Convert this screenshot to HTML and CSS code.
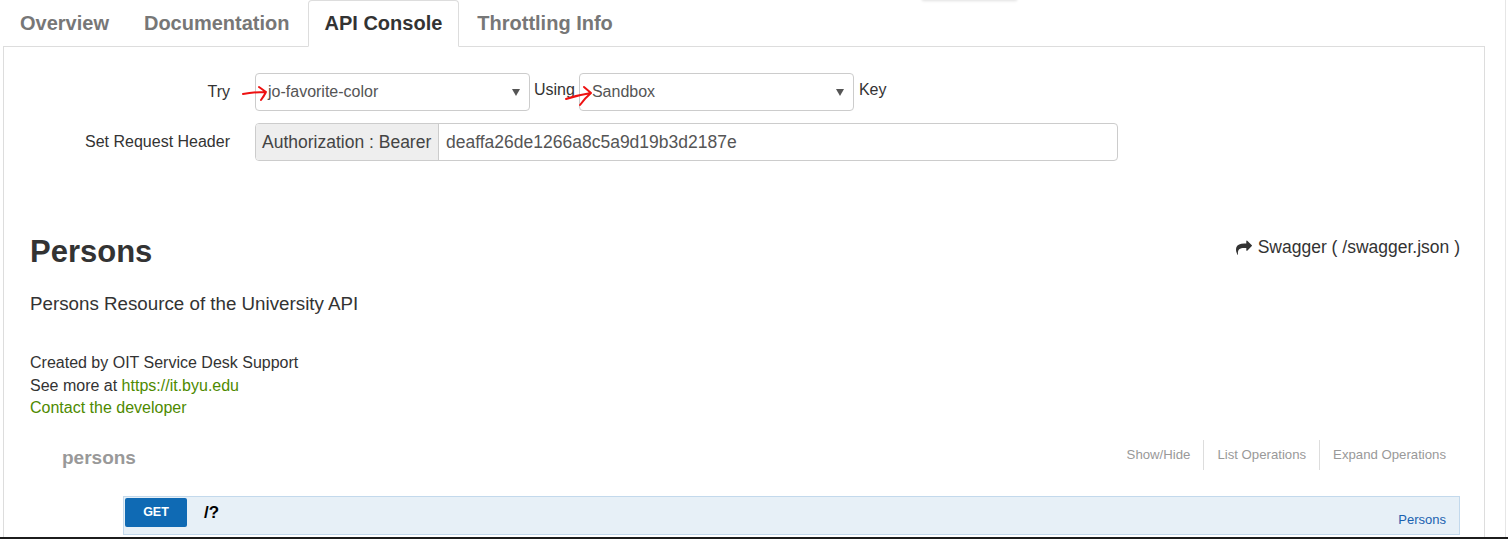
FILE: index.html
```html
<!DOCTYPE html>
<html lang="en">
<head>
<meta charset="utf-8">
<title>API Console</title>
<link rel="stylesheet" href="styles.css">
</head>
<body>
<div class="page">
  <div class="menu-shadow"></div>
  <div class="tabs">
    <ul class="nav-tabs">
      <li><a href="#">Overview</a></li>
      <li><a href="#">Documentation</a></li>
      <li class="active"><a href="#">API Console</a></li>
      <li><a href="#">Throttling Info</a></li>
    </ul>
    <div class="tab-pane">
      <div class="console-form">
        <div class="form-label">Try</div>
        <div class="controls">
          <div class="select"><span>jo-favorite-color</span><span class="caret"></span></div>
          <span class="inline-word using">Using</span>
          <div class="select"><span>Sandbox</span><span class="caret"></span></div>
          <span class="inline-word key">Key</span>
        </div>
        <div class="form-label">Set Request Header</div>
        <div class="controls">
          <div class="input-group">
            <span class="addon">Authorization : Bearer</span>
            <span class="input-value">deaffa26de1266a8c5a9d19b3d2187e</span>
          </div>
        </div>
      </div>

      <div class="info">
        <div class="title-row">
          <h2 class="api-title">Persons</h2>
          <a class="swagger-link" href="#">
            <svg class="share-icon" viewBox="0 0 1792 1792" width="16" height="16" aria-hidden="true"><path d="M1792 640q0 26-19 45l-512 512q-19 19-45 19t-45-19-19-45v-256h-224q-98 0-175.5 6t-154 21.5-133 42.5-105.5 69.5-80 101-48.5 138.5-17.5 181q0 55 5 123 0 6 2.5 23.5t2.5 26.5q0 15-8.5 25t-23.5 10q-16 0-28-17-7-9-13-22t-13.5-30-10.5-24q-127-285-127-451 0-199 53-333 162-403 875-403h224v-256q0-26 19-45t45-19 45 19l512 512q19 19 19 45z"/></svg>
            <span>Swagger ( /swagger.json )</span>
          </a>
        </div>
        <p class="description">Persons Resource of the University API</p>
        <div class="meta">
          <div>Created by OIT Service Desk Support</div>
          <div>See more at <a class="green" href="#">https://it.byu.edu</a></div>
          <div><a class="green" href="#">Contact the developer</a></div>
        </div>

        <div class="resource">
          <div class="resource-heading">
            <h3 class="resource-name">persons</h3>
            <ul class="options">
              <li>Show/Hide</li>
              <li>List Operations</li>
              <li>Expand Operations</li>
            </ul>
          </div>
          <div class="operation">
            <span class="method">GET</span>
            <span class="path">/?</span>
            <a class="op-link" href="#">Persons</a>
          </div>
        </div>
      </div>
    </div>
  </div>
  <svg class="annotations" viewBox="0 0 1508 539" width="1508" height="539" aria-hidden="true">
    <path d="M243 94 Q254 92 266 92 M259 87 L266 92 Q264 96 261 100" />
    <path d="M566 99 Q578 95 591 93 M584 87 L591 93 Q585 98 580 105" />
  </svg>
</div>
<div class="taskbar"></div>
</body>
</html>
```

FILE: styles.css
```css
* { box-sizing: border-box; }
html, body { margin: 0; padding: 0; background: #fff; }
body {
  font-family: "Liberation Sans", Arial, sans-serif;
  color: #333;
  overflow: hidden;
  width: 1508px;
  height: 539px;
}
a { text-decoration: none; }

.page {
  position: relative;
  width: 1506px;
  height: 537px;
  border-right: 1px solid #e6e6e6;
}
.taskbar { height: 2px; width: 1508px; background: #1c1c1c; }

.menu-shadow {
  position: absolute;
  left: 922px;
  top: -6px;
  width: 95px;
  height: 6px;
  box-shadow: 0 1px 3px rgba(0, 0, 0, 0.12);
}

.tabs { margin-left: 3px; width: 1482px; }
.nav-tabs {
  display: flex;
  list-style: none;
  margin: 0;
  padding: 0;
  height: 47px;
  border-bottom: 1px solid #ddd;
}
.nav-tabs li { margin-right: 1px; margin-bottom: -1px; }
.nav-tabs a {
  display: block;
  padding: 10px 16px 10px;
  line-height: 25px;
  font-size: 20px;
  font-weight: bold;
  color: #777;
  border: 1px solid transparent;
  border-radius: 4px 4px 0 0;
}
.nav-tabs li.active a {
  color: #333;
  background: #fff;
  border-color: #ddd;
  border-bottom-color: transparent;
}

.tab-pane {
  height: 490px;
  border: 1px solid #ddd;
  border-top: 0;
  border-bottom: 0;
  overflow: hidden;
}

.console-form {
  padding-top: 26px;
  display: grid;
  grid-template-columns: 226px auto;
  column-gap: 25px;
  row-gap: 12px;
}
.form-label {
  text-align: right;
  font-size: 16px;
  line-height: 38px;
  color: #333;
}
.controls { display: flex; align-items: center; }
.inline-word { font-size: 16px; color: #333; padding-bottom: 4px; }
.using { margin: 0 4px 0 4px; }
.key { margin-left: 5px; }
.select {
  width: 275px;
  height: 38px;
  border: 1px solid #ccc;
  border-radius: 4px;
  display: flex;
  align-items: center;
  justify-content: space-between;
  padding: 0 9px 0 12px;
  font-size: 16px;
  color: #555;
  background: #fff;
}
.caret {
  width: 0;
  height: 0;
  border-left: 4px solid transparent;
  border-right: 4px solid transparent;
  border-top: 7px solid #555;
}
.input-group {
  width: 863px;
  height: 38px;
  display: flex;
  border: 1px solid #ccc;
  border-radius: 4px;
  overflow: hidden;
  font-size: 17.5px;
  color: #555;
}
.addon {
  width: 183px;
  background: #eee;
  border-right: 1px solid #ccc;
  display: flex;
  align-items: center;
  padding-left: 6px;
  color: #444;
}
.input-value { display: flex; align-items: center; padding-left: 7px; }

.info { margin-top: 73px; padding: 0 24px 0 26px; }
.title-row {
  display: flex;
  justify-content: space-between;
  align-items: center;
  height: 34px;
}
.api-title {
  margin: 0;
  font-size: 31px;
  line-height: 34px;
  font-weight: bold;
  color: #333;
  padding-top: 2px;
}
.swagger-link {
  display: flex;
  align-items: center;
  gap: 6px;
  font-size: 17.5px;
  color: #333;
  margin-top: -7px;
}
.share-icon { fill: #333; }
.description {
  margin: 23px 0 0;
  font-size: 18.75px;
  line-height: 26px;
}
.meta { margin-top: 35px; font-size: 16px; line-height: 22.5px; }
.green { color: #4e8a00; }

.resource { margin-top: 20px; padding-left: 32px; }
.resource-heading {
  display: flex;
  justify-content: space-between;
  align-items: center;
  height: 30px;
}
.resource-name {
  margin: 0;
  font-size: 19px;
  font-weight: bold;
  color: #999;
  padding-top: 7px;
}
.options {
  display: flex;
  list-style: none;
  margin: 0;
  padding: 0 1px 0 0;
}
.options li {
  font-size: 13.2px;
  line-height: 30px;
  color: #999;
  padding: 0 13px;
  border-left: 1px solid #ddd;
}
.options li:first-child { border-left: 0; }
.operation {
  margin: 26px 0 0 61px;
  height: 39px;
  display: flex;
  align-items: flex-start;
  padding: 1px;
  background: #e7f0f7;
  border: 1px solid #c3d9ec;
}
.method {
  width: 62px;
  height: 29px;
  background: #0f6ab4;
  color: #fff;
  font-size: 12.5px;
  font-weight: bold;
  display: flex;
  align-items: center;
  justify-content: center;
  border-radius: 2px;
}
.path {
  margin-left: 17px;
  font-size: 17px;
  font-weight: bold;
  line-height: 29px;
  color: #000;
}
.op-link {
  margin-left: auto;
  align-self: flex-end;
  font-size: 13px;
  line-height: 16px;
  color: #1a62b0;
  padding: 0 12px 5px 0;
}

.annotations {
  position: absolute;
  left: 0;
  top: 0;
  pointer-events: none;
}
.annotations path {
  fill: none;
  stroke: #ee1111;
  stroke-width: 2;
  stroke-linecap: round;
  stroke-linejoin: round;
}
```
